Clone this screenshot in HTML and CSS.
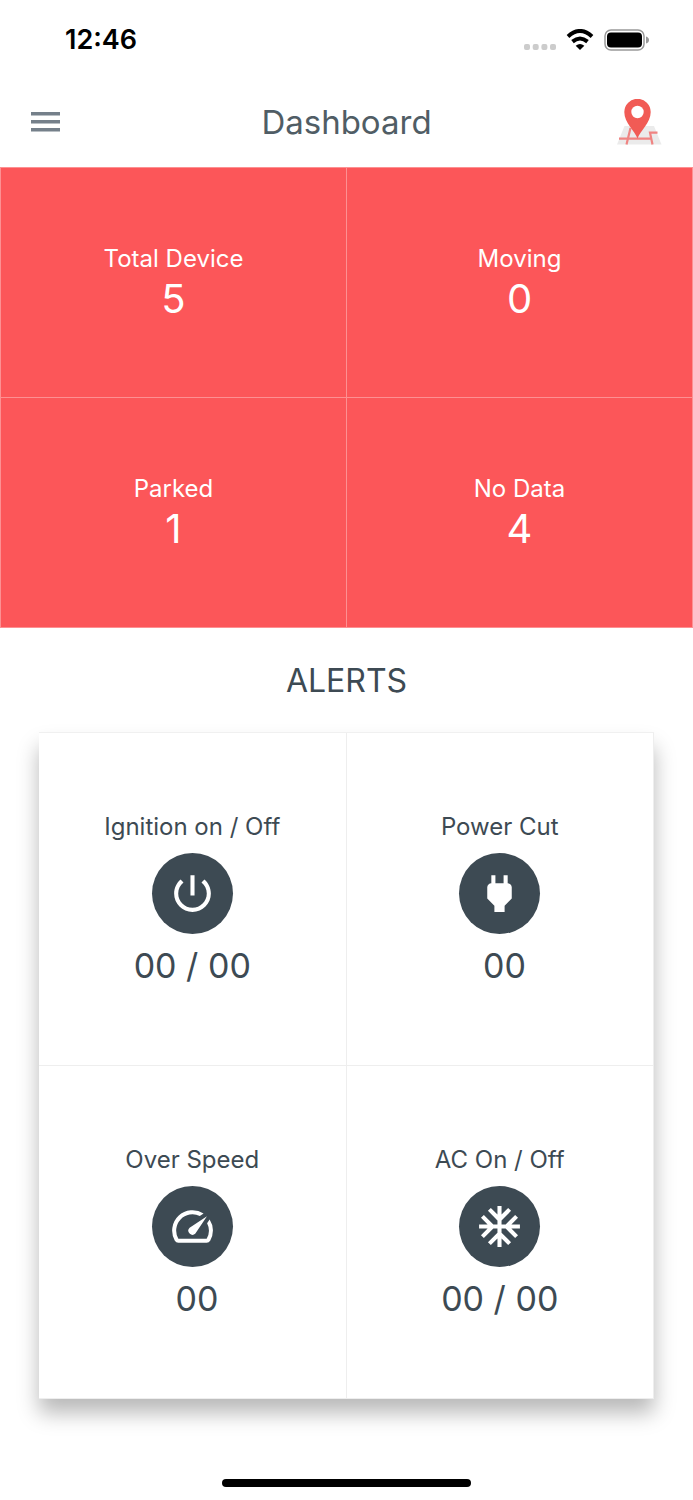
FILE: index.html
```html
<!DOCTYPE html>
<html lang="en">
<head>
<meta charset="utf-8">
<meta name="viewport" content="width=device-width, initial-scale=1">
<title>Dashboard</title>
<link rel="stylesheet" href="styles.css">
</head>
<body>
<div class="screen">
  <div class="status">
    <time class="clock">12:46</time>
    <div class="indicators">
      <svg class="signal" viewBox="0 0 32 6" aria-hidden="true"><rect width="6" height="6" rx="2"/><rect x="8.7" width="6" height="6" rx="2"/><rect x="17.4" width="6" height="6" rx="2"/><rect x="26" width="6" height="6" rx="2"/></svg>
      <svg class="wifi" viewBox="0 0 28 22" aria-hidden="true"><path class="wave" d="M2 7.4Q14-3.4 26 7.4M6.5 12.6Q14 6.4 21.500 12.600"/><path d="M14 21l-4.300-4.300Q14 13.300 18.300 16.700z"/></svg>
      <svg class="battery" viewBox="0 0 46 22" aria-hidden="true"><rect class="shell" x="1" y="1" width="39" height="20" rx="6"/><rect x="3" y="3.500" width="35" height="15" rx="4"/><path class="tip" d="M42 7.500q3 1 3 3.500t-3 3.500z"/></svg>
    </div>
  </div>

  <header class="bar">
    <button class="icon-button" type="button" aria-label="Open menu">
      <svg class="menu" viewBox="0 0 30 20" aria-hidden="true"><path d="M0 0h29v3.500H0zM0 8h29v3.500H0zM0 16h29v3.500H0z"/></svg>
    </button>
    <h1 class="title">Dashboard</h1>
    <button class="icon-button" type="button" aria-label="Show map">
      <svg class="map" viewBox="0 0 46 46" aria-hidden="true">
        <path class="land" d="M8.500 27H38l7.500 18.500H1z"/>
        <path class="road" d="M3 39.700h33M14.500 29L10.500 45.500M41.500 33.700h-7.500l2.500 11.800"/>
        <path class="pin" d="M21.500 39.500C19 32 8.300 24 8.300 13a13.200 13.200 0 0 1 26.400 0C34.700 24 24 32 21.500 39.500z"/>
        <circle class="hole" cx="21.500" cy="13" r="6.200"/>
      </svg>
    </button>
  </header>

  <main>
    <section class="totals" aria-label="Devices">
      <div class="total"><h2 class="label">Total Device</h2><p class="count">5</p></div>
      <div class="total"><h2 class="label">Moving</h2><p class="count">0</p></div>
      <div class="total"><h2 class="label">Parked</h2><p class="count">1</p></div>
      <div class="total"><h2 class="label">No Data</h2><p class="count">4</p></div>
    </section>

    <section class="alerts">
      <h2 class="heading">ALERTS</h2>
      <div class="card">
        <div class="alert">
          <h3 class="label">Ignition on / Off</h3>
          <span class="badge"><svg viewBox="0 0 24 24" aria-hidden="true"><path d="M13 3h-2v10h2V3zm4.830 2.170l-1.420 1.420C17.990 7.860 19 9.810 19 12c0 3.870-3.130 7-7 7s-7-3.130-7-7c0-2.190 1.010-4.140 2.580-5.420L6.170 5.170C4.230 6.820 3 9.260 3 12c0 4.970 4.030 9 9 9s9-4.030 9-9c0-2.740-1.230-5.180-3.170-6.830z"/></svg></span>
          <p class="value">00 / 00</p>
        </div>
        <div class="alert">
          <h3 class="label">Power Cut</h3>
          <span class="badge"><svg viewBox="0 0 24 24" aria-hidden="true"><path d="M16.010 7L16 3h-2v4h-4V3H8v4h-.010C7 6.990 6 7.990 6 8.990v5.490L9.500 18v3h5v-3l3.500-3.510v-5.500c0-1-1-2-1.990-1.990z"/></svg></span>
          <p class="value">&nbsp;00</p>
        </div>
        <div class="alert">
          <h3 class="label">Over Speed</h3>
          <span class="badge"><svg viewBox="0 0 24 24" aria-hidden="true"><path d="M20.380 8.570l-1.230 1.850a8 8 0 0 1-.220 7.580H5.070A8 8 0 0 1 15.580 6.850l1.850-1.230A10 10 0 0 0 3.350 19a2 2 0 0 0 1.720 1h13.850a2 2 0 0 0 1.740-1 10 10 0 0 0-.270-10.440zm-9.790 6.840a2 2 0 0 0 2.830 0l5.660-8.490-8.490 5.660a2 2 0 0 0 0 2.830z"/></svg></span>
          <p class="value">&nbsp;00</p>
        </div>
        <div class="alert">
          <h3 class="label">AC On / Off</h3>
          <span class="badge"><svg viewBox="0 0 24 24" aria-hidden="true"><path d="M22 11h-4.170l3.240-3.240-1.410-1.420L15 11h-2V9l4.660-4.660-1.420-1.410L13 6.170V2h-2v4.170L7.760 2.930 6.340 4.340 11 9v2H9L4.340 6.340 2.930 7.760 6.170 11H2v2h4.170l-3.240 3.240 1.410 1.420L9 13h2v2l-4.660 4.660 1.420 1.410L11 17.830V22h2v-4.170l3.240 3.240 1.420-1.410L13 15v-2h2l4.660 4.660 1.410-1.420L17.830 13H22z"/></svg></span>
          <p class="value">00 / 00</p>
        </div>
      </div>
    </section>
  </main>

  <div class="home"></div>
</div>
</body>
</html>
```
FILE: styles.css
```css
* { box-sizing: border-box; }

body, h1, h2, h3, p { margin: 0; }

body {
  background: #fff;
  color: #3d4a53;
  font-family: Inter, "Liberation Sans", sans-serif;
}

h1, h2, h3 { font-weight: 400; }

.screen {
  display: flex;
  flex-direction: column;
  min-height: 100vh;
}

.status {
  display: flex;
  align-items: center;
  justify-content: space-between;
  height: 78px;
  padding: 2px 43px 0 65px;
  color: #000;
}

.clock {
  font-size: 27px;
  font-weight: 600;
  line-height: 32px;
}

.indicators {
  display: flex;
  align-items: center;
  gap: 10px;
}

.signal {
  width: 32px;
  height: 6px;
  margin-top: 14px;
  fill: #ccc;
}

.wifi { width: 28px; height: 22px; }
.wave { fill: none; stroke: #000; stroke-width: 4; }
.battery { width: 46px; height: 22px; }
.shell { fill: none; stroke: #999; stroke-width: 1.5; }
.tip { fill: #999; }

.bar {
  display: flex;
  align-items: center;
  justify-content: space-between;
  height: 89px;
  padding: 0 31px 2px;
}

.icon-button {
  display: flex;
  width: 46px;
  padding: 0;
  border: 0;
  background: none;
}

.menu { width: 30px; height: 20px; fill: #75808a; }
.map { width: 46px; height: 46px; }
.land { fill: #ebebeb; }
.road { fill: none; stroke: #f08482; stroke-width: 2.2; }
.pin { fill: #f15b55; }
.hole { fill: #fff; }

.title {
  color: #505d65;
  font-size: 33px;
  line-height: 40px;
}

.totals {
  display: grid;
  grid-template-columns: 1fr 1fr;
  border-top: 1px solid #fd9092;
  border-left: 1px solid #fd9092;
  background: #fc5659;
  color: #fff;
}

.total {
  display: flex;
  flex-direction: column;
  align-items: center;
  justify-content: center;
  min-height: 230px;
  border-right: 1px solid #fd9092;
  border-bottom: 1px solid #fd9092;
}

.label { font-size: 24px; line-height: 32px; }
.count { font-size: 40px; line-height: 48px; }

.heading {
  padding: 33px 0 32px;
  font-size: 32px;
  line-height: 40px;
  text-align: center;
}

.card {
  display: grid;
  grid-template-columns: 1fr 1fr;
  margin: 0 39px;
  background: #fff;
  box-shadow: 0 -1px 0 #f0f0f0, 0 14px 20px rgba(0, 0, 0, 0.28);
}

.alert {
  display: flex;
  flex-direction: column;
  align-items: center;
  justify-content: center;
  gap: 10px;
  min-height: 333px;
  border-right: 1px solid #eee;
  border-bottom: 1px solid #eee;
}

.badge {
  display: flex;
  align-items: center;
  justify-content: center;
  width: 81px;
  height: 81px;
  border-radius: 50%;
  background: #3d4a53;
}

.badge svg { width: 49px; height: 49px; fill: #fff; }
.value { font-size: 34px; line-height: 44px; }

.home {
  width: 36%;
  height: 8px;
  margin: auto auto 13px;
  border-radius: 4px;
  background: #000;
}
```
